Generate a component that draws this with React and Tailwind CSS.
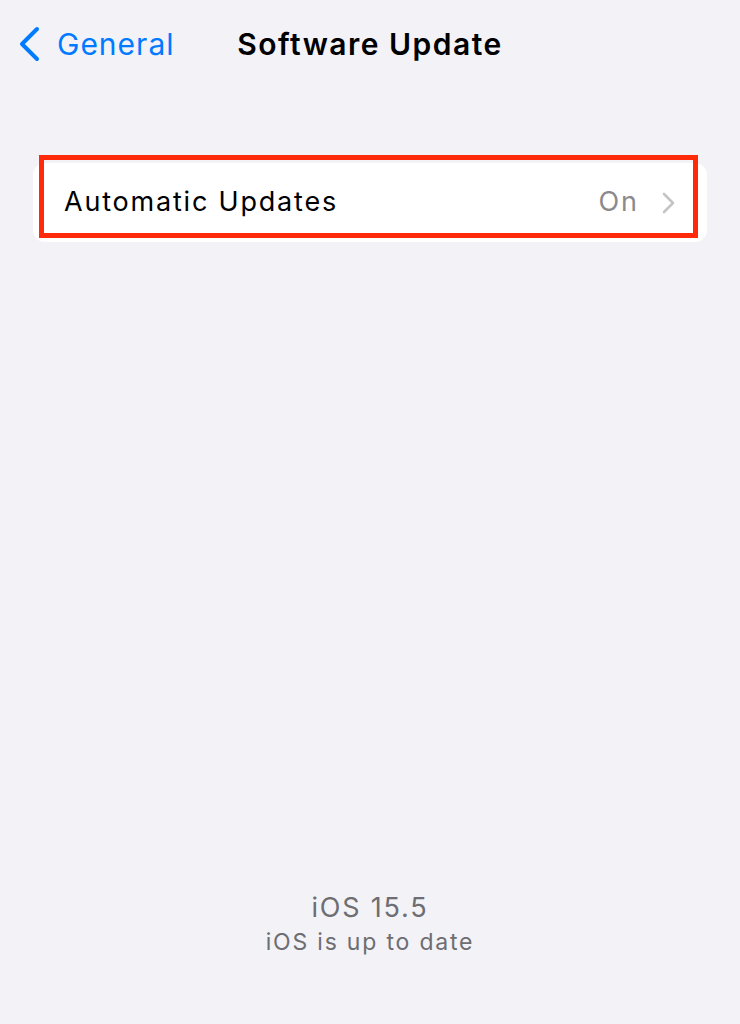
import React from 'react';

const font = { fontFamily: 'Inter, "Noto Sans", sans-serif' };

function BackChevron() {
  return (
    <svg width="24" height="36" viewBox="0 0 24 36" fill="none">
      <path d="M20 3 L5 18 L20 33" stroke="#007aff" strokeWidth="4" strokeLinecap="round" strokeLinejoin="round" />
    </svg>
  );
}

function RowChevron() {
  return (
    <svg width="14" height="22" viewBox="0 0 14 22" fill="none">
      <path d="M3 2 L12 11 L3 20" stroke="#c4c4c7" strokeWidth="2.6" strokeLinecap="round" strokeLinejoin="round" />
    </svg>
  );
}

export default function App() {
  return (
    <div className="h-[1024px] w-[740px] bg-[#f2f2f7] flex flex-col overflow-hidden" style={font}>
      <header className="h-[88px] grid grid-cols-[1fr_auto_1fr] items-center">
        <div className="flex items-center gap-[16px] pl-[17px]">
          <BackChevron />
          <span className="text-[30px] text-[#007aff] tracking-[1px]">General</span>
        </div>
        <h1 className="text-[30px] font-semibold text-black tracking-[1.5px]">Software Update</h1>
        <div />
      </header>

      <div className="relative mx-[33px] mt-[75px]">
        <div className="h-[79px] rounded-[12px] bg-white flex items-center pl-[31px] pr-[32px]">
          <span className="flex-1 text-[27px] text-black tracking-[1.8px]">Automatic Updates</span>
          <span className="text-[27px] text-[#8a8a8e] tracking-[2px] mr-[22px]">On</span>
          <RowChevron />
        </div>
        <div className="absolute left-[6px] right-[9px] top-[-8px] bottom-[4px] border-[5px] border-[#ff2a0a]" />
      </div>

      <div className="flex-1" />

      <div className="flex flex-col items-center pb-[66px] text-[#6d6d72]">
        <span className="text-[27px] leading-[36px] tracking-[1.8px]">iOS 15.5</span>
        <span className="text-[23px] leading-[32px] tracking-[1.8px]">iOS is up to date</span>
      </div>
    </div>
  );
}
